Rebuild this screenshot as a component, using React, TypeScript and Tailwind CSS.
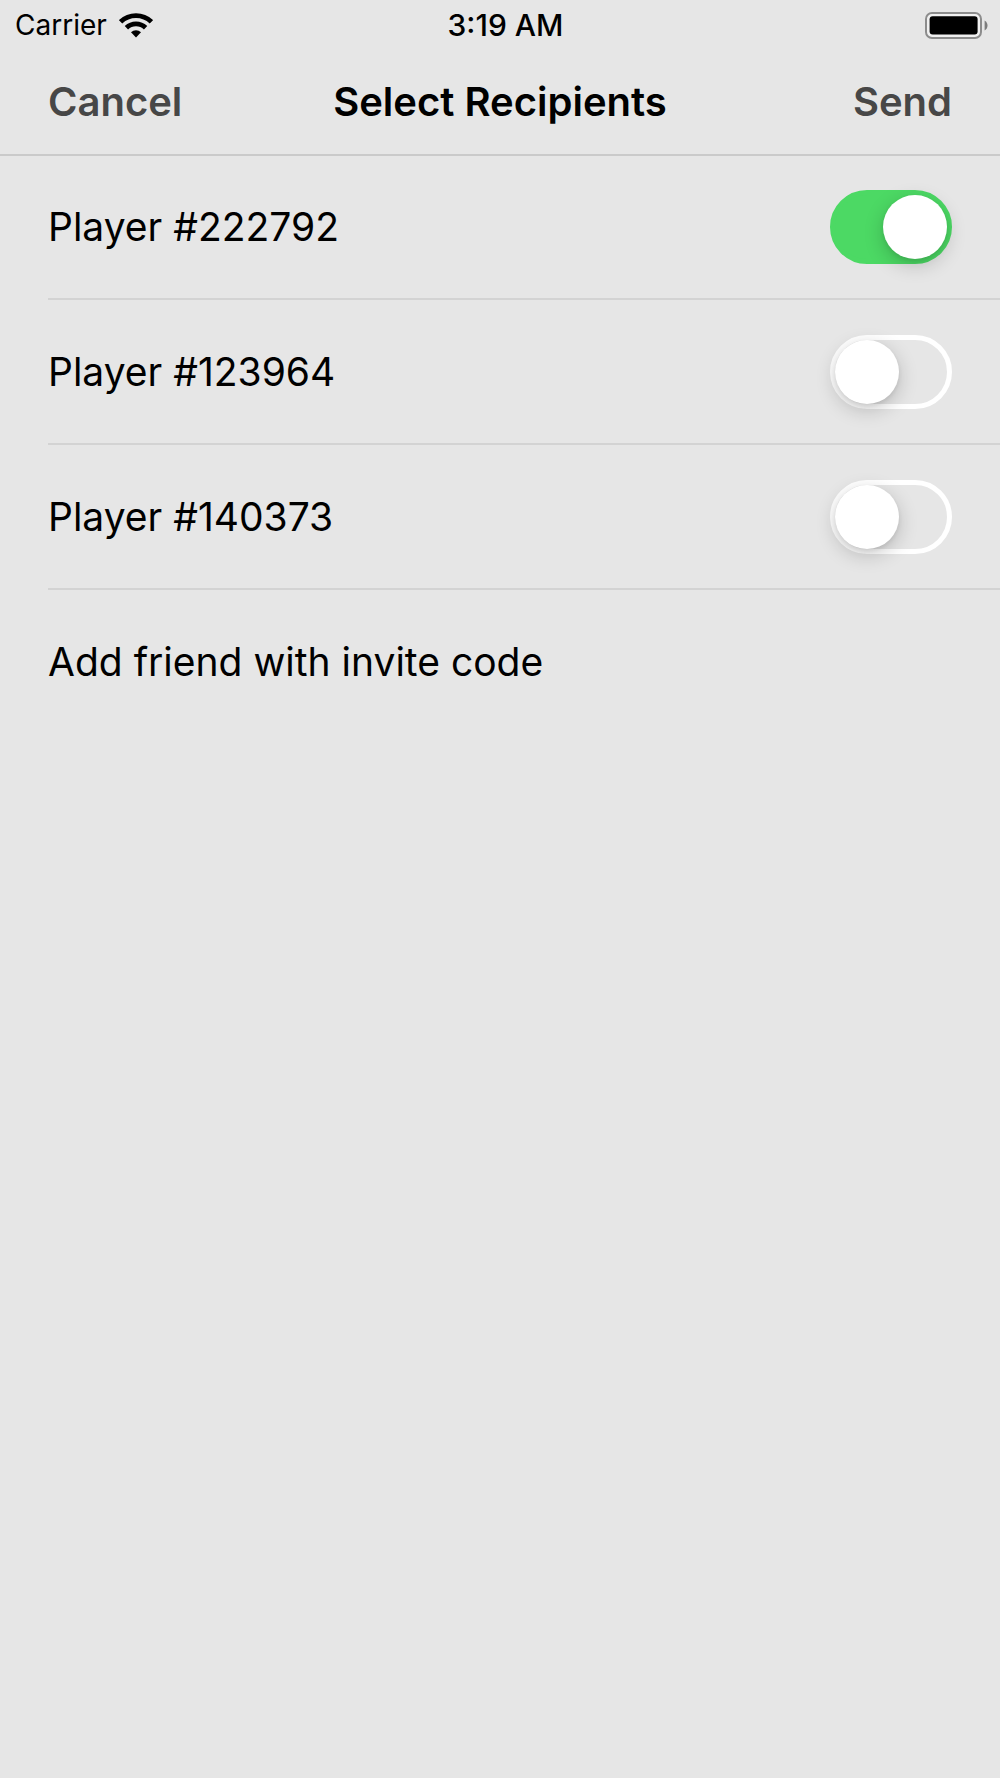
import { useState } from 'react';

type Player = { id: string; selected: boolean };

const initialPlayers: Player[] = [
  { id: '222792', selected: true },
  { id: '123964', selected: false },
  { id: '140373', selected: false },
];

function WifiIcon() {
  return (
    <svg aria-hidden viewBox="0 0 34 25" className="h-[25px] w-[34px]">
      <g fill="none" stroke="#000" strokeWidth="4.8">
        <path d="M1.6 8.8a22.2 22.2 0 0 1 30.8 0" />
        <path d="M7.4 14.8a13.9 13.9 0 0 1 19.2 0" />
      </g>
      <path d="M17 24.4l-5-5.1a7.3 7.3 0 0 1 10 0z" />
    </svg>
  );
}

function BatteryIcon() {
  return (
    <svg aria-hidden viewBox="0 0 63 27" className="h-[27px] w-[63px]">
      <rect x="1" y="1" width="55" height="25" rx="6" fill="#f0f0f0" stroke="#8c8c8c" strokeWidth="2" />
      <rect x="4.6" y="4.2" width="48" height="18.4" rx="3" />
      <path d="M59.6 8.6c3.9 2 3.9 8 0 10z" fill="#7c7c7c" />
    </svg>
  );
}

function StatusBar() {
  return (
    <div className="grid h-[50px] grid-cols-3 items-center pl-[15px] pr-3 text-[28px] leading-8">
      <div className="flex items-center gap-3">
        <span>Carrier</span>
        <WifiIcon />
      </div>
      <div className="pl-2 text-center text-[30px] font-medium">3:19 AM</div>
      <div className="flex justify-end">
        <BatteryIcon />
      </div>
    </div>
  );
}

function NavBar() {
  return (
    <header className="flex h-[106px] items-center justify-between border-b-2 border-[#cacaca] px-12 text-[40px] leading-[48px] font-semibold">
      <button type="button" className="flex-1 text-left text-[#474747]">Cancel</button>
      <h1 className="whitespace-nowrap">Select Recipients</h1>
      <button type="button" className="flex-1 text-right text-[#474747]">Send</button>
    </header>
  );
}

// The knob is the checkbox's own ::before, so the switch stays a single input.
function PlayerRow({ player, onToggle }: { player: Player; onToggle: (id: string) => void }) {
  return (
    <li className="border-b-2 border-[#d3d3d3] pr-12">
      <label className="flex h-[142px] items-center justify-between">
        <span>Player #{player.id}</span>
        <input
          type="checkbox"
          role="switch"
          checked={player.selected}
          onChange={() => onToggle(player.id)}
          className="flex h-[74px] w-[122px] flex-none appearance-none items-center rounded-full border-[5px] border-white before:size-16 before:rounded-full before:bg-white before:shadow-[0_6px_20px_rgba(0,0,0,0.2),0_2px_4px_rgba(0,0,0,0.08)] before:content-[''] checked:justify-end checked:border-[#4cd964] checked:bg-[#4cd964]"
        />
      </label>
    </li>
  );
}

export default function App() {
  const [players, setPlayers] = useState(initialPlayers);

  const toggle = (id: string) =>
    setPlayers((prev) => prev.map((p) => (p.id === id ? { ...p, selected: !p.selected } : p)));

  return (
    <div className="min-h-screen bg-[#e6e6e6] font-['Inter','Liberation_Sans',sans-serif] text-black">
      <StatusBar />
      <NavBar />
      <main className="pl-12 text-[39px] leading-[48px]">
        <ul className="flex flex-col gap-px">
          {players.map((p) => (
            <PlayerRow key={p.id} player={p} onToggle={toggle} />
          ))}
        </ul>
        <button type="button" className="flex h-[143px] w-full items-center text-left">
          Add friend with invite code
        </button>
      </main>
    </div>
  );
}
